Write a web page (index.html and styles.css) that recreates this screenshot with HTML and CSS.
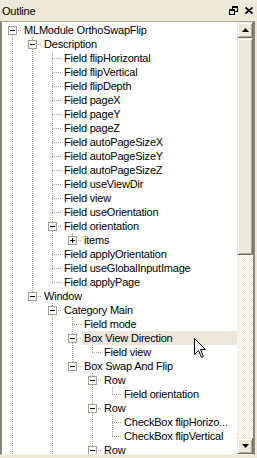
FILE: index.html
```html
<!DOCTYPE html>
<html lang="en">
<head>
    <meta charset="UTF-8">
    <meta name="viewport" content="width=device-width, initial-scale=1.0">
    <title>Outline</title>
    <link rel="stylesheet" href="styles.css">
</head>
<body>
    <div class="panel">
        <div class="titlebar">
            <span class="title">Outline</span>
            <svg class="btn-restore" width="9" height="9" viewBox="0 0 9 9">
                <rect x="3" y="0" width="6" height="6" fill="#000"/>
                <rect x="4" y="2" width="4" height="3" fill="#ece9d8"/>
                <rect x="0" y="3" width="6" height="6" fill="#000"/>
                <rect x="1" y="5" width="4" height="3" fill="#ece9d8"/>
            </svg>
            <svg class="btn-close" width="8" height="7" viewBox="0 0 8 7">
                <path d="M0.5 0.5 L7.5 6.5 M7.5 0.5 L0.5 6.5" stroke="#000" stroke-width="1.7"/>
            </svg>
        </div>

        <div class="view">
            <div class="tree">
                <div class="row"><span class="c top"><b class="box minus"></b></span><span class="label">MLModule OrthoSwapFlip</span></div>
                <div class="row"><span class="c v"></span><span class="c tee"><b class="box minus"></b></span><span class="label">Description</span></div>
                <div class="row"><span class="c v"></span><span class="c v"></span><span class="c tee"></span><span class="label">Field flipHorizontal</span></div>
                <div class="row"><span class="c v"></span><span class="c v"></span><span class="c tee"></span><span class="label">Field flipVertical</span></div>
                <div class="row"><span class="c v"></span><span class="c v"></span><span class="c tee"></span><span class="label">Field flipDepth</span></div>
                <div class="row"><span class="c v"></span><span class="c v"></span><span class="c tee"></span><span class="label">Field pageX</span></div>
                <div class="row"><span class="c v"></span><span class="c v"></span><span class="c tee"></span><span class="label">Field pageY</span></div>
                <div class="row"><span class="c v"></span><span class="c v"></span><span class="c tee"></span><span class="label">Field pageZ</span></div>
                <div class="row"><span class="c v"></span><span class="c v"></span><span class="c tee"></span><span class="label">Field autoPageSizeX</span></div>
                <div class="row"><span class="c v"></span><span class="c v"></span><span class="c tee"></span><span class="label">Field autoPageSizeY</span></div>
                <div class="row"><span class="c v"></span><span class="c v"></span><span class="c tee"></span><span class="label">Field autoPageSizeZ</span></div>
                <div class="row"><span class="c v"></span><span class="c v"></span><span class="c tee"></span><span class="label">Field useViewDir</span></div>
                <div class="row"><span class="c v"></span><span class="c v"></span><span class="c tee"></span><span class="label">Field view</span></div>
                <div class="row"><span class="c v"></span><span class="c v"></span><span class="c tee"></span><span class="label">Field useOrientation</span></div>
                <div class="row"><span class="c v"></span><span class="c v"></span><span class="c tee"><b class="box minus"></b></span><span class="label">Field orientation</span></div>
                <div class="row"><span class="c v"></span><span class="c v"></span><span class="c v"></span><span class="c end"><b class="box plus"></b></span><span class="label">items</span></div>
                <div class="row"><span class="c v"></span><span class="c v"></span><span class="c tee"></span><span class="label">Field applyOrientation</span></div>
                <div class="row"><span class="c v"></span><span class="c v"></span><span class="c tee"></span><span class="label">Field useGlobalInputImage</span></div>
                <div class="row"><span class="c v"></span><span class="c v"></span><span class="c end"></span><span class="label">Field applyPage</span></div>
                <div class="row"><span class="c v"></span><span class="c end"><b class="box minus"></b></span><span class="label">Window</span></div>
                <div class="row"><span class="c v"></span><span class="c"></span><span class="c tee"><b class="box minus"></b></span><span class="label">Category Main</span></div>
                <div class="row"><span class="c v"></span><span class="c"></span><span class="c v"></span><span class="c tee"></span><span class="label">Field mode</span></div>
                <div class="row hot"><span class="c v"></span><span class="c"></span><span class="c v"></span><span class="c tee"><b class="box minus"></b></span><span class="label">Box View Direction</span></div>
                <div class="row"><span class="c v"></span><span class="c"></span><span class="c v"></span><span class="c v"></span><span class="c end"></span><span class="label">Field view</span></div>
                <div class="row"><span class="c v"></span><span class="c"></span><span class="c v"></span><span class="c end"><b class="box minus"></b></span><span class="label">Box Swap And Flip</span></div>
                <div class="row"><span class="c v"></span><span class="c"></span><span class="c v"></span><span class="c"></span><span class="c tee"><b class="box minus"></b></span><span class="label">Row</span></div>
                <div class="row"><span class="c v"></span><span class="c"></span><span class="c v"></span><span class="c"></span><span class="c v"></span><span class="c end"></span><span class="label">Field orientation</span></div>
                <div class="row"><span class="c v"></span><span class="c"></span><span class="c v"></span><span class="c"></span><span class="c tee"><b class="box minus"></b></span><span class="label">Row</span></div>
                <div class="row"><span class="c v"></span><span class="c"></span><span class="c v"></span><span class="c"></span><span class="c v"></span><span class="c tee"></span><span class="label">CheckBox flipHorizo...</span></div>
                <div class="row"><span class="c v"></span><span class="c"></span><span class="c v"></span><span class="c"></span><span class="c v"></span><span class="c end"></span><span class="label">CheckBox flipVertical</span></div>
                <div class="row"><span class="c v"></span><span class="c"></span><span class="c v"></span><span class="c"></span><span class="c tee"><b class="box minus"></b></span><span class="label">Row</span></div>
            </div>

            <div class="scrollbar">
                <div class="sb-btn">
                    <svg width="7" height="4" viewBox="0 0 7 4"><path d="M3.5 0 L7 4 L0 4 Z" fill="#000"/></svg>
                </div>
                <div class="thumb"></div>
                <div class="track"></div>
                <div class="sb-btn">
                    <svg width="7" height="4" viewBox="0 0 7 4"><path d="M0 0 L7 0 L3.5 4 Z" fill="#000"/></svg>
                </div>
            </div>
        </div>

        <svg class="cursor" width="13" height="21" viewBox="0 0 13 21">
            <path d="M0.5 0.5 L0.5 16.5 L4.5 12.5 L7.5 19.5 L9.5 18.5 L6.5 11.5 L11.5 11.5 Z" fill="#fff" stroke="#000" stroke-width="1"/>
        </svg>
    </div>
</body>
</html>
```

FILE: styles.css
```css
body {
    margin: 0;
    padding: 0;
    background-color: #ece9d8;
    font-family: 'Liberation Sans', Arial, sans-serif;
    font-size: 11px;
    color: #000;
    overflow: hidden;
}

.panel {
    position: relative;
    width: 257px;
    height: 458px;
}

.titlebar {
    display: flex;
    align-items: center;
    height: 21px;
    padding: 0 4px 0 2px;
}

.title {
    flex: 1;
    letter-spacing: -0.2px;
}

.btn-restore {
    margin-right: 7px;
    margin-top: -1px;
}

.btn-close {
    margin-top: -1px;
}

.view {
    display: flex;
    width: 255px;
    height: 434px;
    box-sizing: border-box;
    background-color: #fff;
    border-top: 1px solid #aca899;
    border-left: 2px solid #87857a;
    border-right: 2px solid #87857a;
    border-bottom: 1px solid #f7f6f1;
}

.tree {
    flex: 1;
    overflow: hidden;
    padding-top: 1px;
}

/* tree rows */
.row {
    display: flex;
    height: 14px;
    line-height: 14px;
    white-space: nowrap;
}

.c {
    flex: none;
    width: 20px;
    height: 14px;
    --vline: repeating-linear-gradient(to bottom, #a5a291 0 1px, transparent 1px 2px);
    --hline: repeating-linear-gradient(to right, #a5a291 0 1px, transparent 1px 2px);
    background-repeat: no-repeat;
}

.c.v {
    background-image: var(--vline);
    background-position: 10px 0;
    background-size: 1px 14px;
}

.c.tee {
    background-image: var(--vline), var(--hline);
    background-position: 10px 0, 10px 7px;
    background-size: 1px 14px, 10px 1px;
}

.c.end {
    background-image: var(--vline), var(--hline);
    background-position: 10px 0, 10px 7px;
    background-size: 1px 8px, 10px 1px;
}

.c.top {
    background-image: var(--vline), var(--hline);
    background-position: 10px 8px, 10px 7px;
    background-size: 1px 6px, 10px 1px;
}

.box {
    display: block;
    width: 9px;
    height: 9px;
    box-sizing: border-box;
    margin: 3px 0 0 6px;
    border: 1px solid #a09e92;
    background: linear-gradient(#000, #000) center / 5px 1px no-repeat, #fff;
}

.box.plus {
    background: linear-gradient(#000, #000) center / 5px 1px no-repeat,
                linear-gradient(#000, #000) center / 1px 5px no-repeat, #fff;
}

.label {
    padding: 0 2px;
    letter-spacing: -0.2px;
}

.row.hot .label {
    flex: 1;
    background-color: #ebe8db;
}

/* scrollbar */
.scrollbar {
    display: flex;
    flex-direction: column;
    width: 16px;
    flex: none;
}

.sb-btn, .thumb {
    box-sizing: border-box;
    background-color: #ece9d8;
    border: 1px solid;
    border-color: #ece9d8 #716f64 #716f64 #ece9d8;
    box-shadow: inset 1px 1px #fff, inset -1px -1px #aca899;
}

.sb-btn {
    height: 16px;
    display: flex;
    align-items: center;
    justify-content: center;
}

.sb-btn svg {
    display: block;
}

.thumb {
    height: 217px;
}

.track {
    flex: 1;
    background: repeating-conic-gradient(#fff 0 25%, #ece9d8 0 50%) 0 0 / 2px 2px;
}

.cursor {
    position: absolute;
    left: 194px;
    top: 338px;
}
```
